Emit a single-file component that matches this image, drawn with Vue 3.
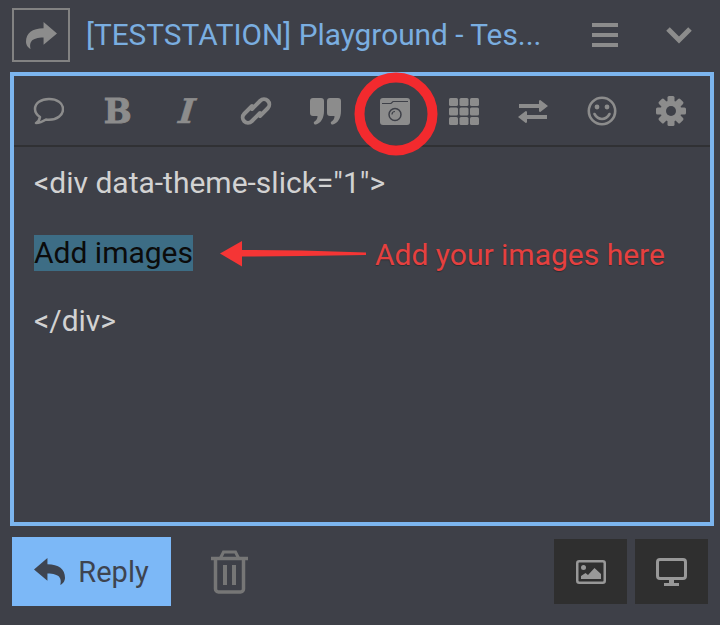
<script setup>
const tools = ['comment','bold','italic','link','quote','camera','grid','exchange','smile','gear']
</script>

<template>
  <div class="page">
    <header class="head">
      <button class="back">
        <svg width="31" height="27" viewBox="0 0 30 26"><path d="M30 11 17 0v6C6 6 0 11 0 19c0 3 2 6 4.500 7C3 20 5 15 17 15v7Z" fill="#8c8c8c"/></svg>
      </button>
      <div class="title">[TESTSTATION] Playground - Tes...</div>
      <svg class="menu" width="26" height="24" viewBox="0 0 26 24"><path d="M0 0h26v4H0zM0 10h26v4H0zM0 20h26v4H0z" fill="#8c8c8c"/></svg>
      <svg class="chev" width="26" height="18" viewBox="0 0 26 18"><path d="M2 3 13 14 24 3" fill="none" stroke="#8c8c8c" stroke-width="5"/></svg>
    </header>

    <section class="editor">
      <nav class="toolbar">
        <span v-for="t in tools" :key="t" class="tool">
          <svg v-if="t==='comment'" width="31" height="29" viewBox="0 0 31 29"><path d="M16 2C8 2 2 6 2 12c0 3 2 6 5 8-.5 3-2 5-4 6 4 0 7-1.500 10-3.500 1 .2 2 .2 3 .2 8 0 14-4.500 14-10.700S24 2 16 2Z" fill="none" stroke="#8c8c8c" stroke-width="2.500" stroke-linejoin="round"/></svg>
          <span v-else-if="t==='bold'" class="glyph bold">B</span>
          <span v-else-if="t==='italic'" class="glyph italic">I</span>
          <svg v-else-if="t==='link'" width="40" height="40" viewBox="0 0 40 40"><g fill="none" stroke="#8c8c8c" stroke-width="3.900" stroke-linecap="round"><path d="M16 18 24.250 9.750A5.300 5.300 0 0 1 31.750 17.250L24 25"/><path d="M24 22 15.750 30.250A5.300 5.300 0 0 1 8.250 22.750L16 15"/></g></svg>
          <svg v-else-if="t==='quote'" width="31" height="27" viewBox="0 0 31 27"><path d="M3 0h8a3 3 0 0 1 3 3v10c0 7-3 12-8 13.500-2 .5-3-2-1.500-3 2-1 3-3 3-5.500H3a3 3 0 0 1-3-3V3a3 3 0 0 1 3-3Z" fill="#8c8c8c"/><path d="M20 0h8a3 3 0 0 1 3 3v10c0 7-3 12-8 13.500-2 .5-3-2-1.500-3 2-1 3-3 3-5.500H20a3 3 0 0 1-3-3V3a3 3 0 0 1 3-3Z" fill="#8c8c8c"/></svg>
          <svg v-else-if="t==='camera'" width="30" height="27" viewBox="0 0 30 27"><rect width="30" height="27" rx="3" fill="#8c8c8c"/><path d="M2 5.500h9L13 3.500h15" fill="none" stroke="#3e4048" stroke-width="1.200"/><circle cx="15" cy="16.500" r="6" fill="none" stroke="#3e4048" stroke-width="1.500"/><path d="M12 16.500a3 3 0 0 1 3-3" fill="none" stroke="#3e4048" stroke-width="1.200"/></svg>
          <svg v-else-if="t==='grid'" width="30" height="27" viewBox="0 0 30 27"><g fill="#8c8c8c"><rect v-for="c in 9" :key="c" :x="((c-1)%3)*10.500" :y="Math.floor((c-1)/3)*9.500" width="9" height="8" rx="1.500"/></g></svg>
          <svg v-else-if="t==='exchange'" width="30" height="23" viewBox="0 0 30 23"><path d="M1 4h20V1a1 1 0 0 1 1.600-.7L30 6l-7.400 5.700A1 1 0 0 1 21 11V8H1ZM29 15H9v-3a1 1 0 0 0-1.600-.7L0 17l7.400 5.700A1 1 0 0 0 9 22v-3h20Z" fill="#8c8c8c"/></svg>
          <svg v-else-if="t==='smile'" width="30" height="30" viewBox="0 0 30 30"><circle cx="15" cy="15" r="13.200" fill="none" stroke="#8c8c8c" stroke-width="2.600"/><circle cx="10" cy="11" r="2.400" fill="#8c8c8c"/><circle cx="20" cy="11" r="2.400" fill="#8c8c8c"/><path d="M7.500 18c2 3.500 4.500 5 7.500 5s5.500-1.500 7.500-5" fill="none" stroke="#8c8c8c" stroke-width="2.600" stroke-linecap="round"/></svg>
          <svg v-else width="30" height="30" viewBox="0 0 30 30"><g fill="#8c8c8c"><rect v-for="a in [0,45,90,135]" :key="a" x="11.500" y="0" width="7" height="30" rx="1.500" :transform="`rotate(${a} 15 15)`"/><circle cx="15" cy="15" r="10.500"/></g><circle cx="15" cy="15" r="5" fill="#3e4048"/></svg>
        </span>
      </nav>
      <div class="body">
        <p>&lt;div data-theme-slick="1"&gt;</p>
        <p class="blank first"></p>
        <p><mark>Add images</mark></p>
        <p class="blank last"></p>
        <p>&lt;/div&gt;</p>
      </div>

      <svg class="ring" width="84" height="84" viewBox="0 0 84 84"><circle cx="42" cy="42" r="36.500" fill="none" stroke="#f32a2e" stroke-width="10"/></svg>
      <svg class="arrow" width="148" height="28" viewBox="0 0 148 28"><path d="M0 13.500 22 1v9l60 .5 64 2v2.500l-64 1-60 .5v10Z" fill="#f53535"/></svg>
      <div class="note">Add your images here</div>
    </section>

    <footer class="foot">
      <button class="reply">
        <svg width="31" height="27" viewBox="0 0 30 26"><path d="M0 11 13 0v6c11 0 17 5 17 13 0 3-2 6-4.500 7C27 20 25 15 13 15v7Z" fill="#3e4450"/></svg>
        <span>Reply</span>
      </button>
      <svg class="trash" width="37" height="44" viewBox="0 0 37 44"><g fill="none" stroke="#767676" stroke-width="3.500"><path d="M0 8.500h37"/><path d="M4.500 9v30a3 3 0 0 0 3 3h22a3 3 0 0 0 3-3V9"/><path d="M9.500 8l3-6h12l3 6" stroke-width="3"/><path d="M14 15v20M23 15v20" stroke-width="4"/></g></svg>
      <div class="spacer"></div>
      <button class="square">
        <svg width="30" height="24" viewBox="0 0 30 24"><rect x="1.250" y="1.250" width="27.500" height="21.500" rx="2" fill="none" stroke="#989898" stroke-width="2.500"/><circle cx="7.500" cy="7.500" r="2.500" fill="#989898"/><path d="M5 19v-3l4.500-3 2.500 2 6.500-7L25 14v5Z" fill="#989898"/></svg>
      </button>
      <button class="square">
        <svg width="31" height="28" viewBox="0 0 31 28"><rect x="1.500" y="1.500" width="28" height="19" rx="2.500" fill="none" stroke="#989898" stroke-width="3"/><path d="M13 22h5v3h5v3H8v-3h5Z" fill="#989898"/></svg>
      </button>
    </footer>
  </div>
</template>

<style scoped>
.page {
  width: 720px;
  height: 625px;
  background: #3e4048;
  font-family: Roboto, "Liberation Sans", sans-serif;
  overflow: hidden;
  box-sizing: border-box;
}
button {
  border: 0;
  padding: 0;
  font: inherit;
  display: flex;
  align-items: center;
  justify-content: center;
}
.head {
  height: 72px;
  display: flex;
  align-items: center;
  padding: 0 28px 2px 12px;
  box-sizing: border-box;
}
.back {
  width: 58px;
  height: 54px;
  box-sizing: border-box;
  background: transparent;
  border: 2px solid #828282;
  flex: none;
  margin-right: 16px;
}
.title {
  flex: 1;
  font-size: 29.8px;
  line-height: 34px;
  color: #7aaee0;
  white-space: nowrap;
}
.menu { flex: none; margin-right: 48px; }
.chev { flex: none; }
.editor {
  position: relative;
  margin: 0 6px 0 10px;
  height: 454px;
  border: 4px solid #7cb5ee;
  box-sizing: border-box;
}
.toolbar {
  height: 71px;
  display: grid;
  grid-template-columns: repeat(10, 69.2px);
  border-bottom: 2px solid #303134;
  box-sizing: border-box;
}
.tool {
  display: flex;
  align-items: center;
  justify-content: center;
  padding-top: 1px;
}
.glyph {
  color: #8c8c8c;
  font-family: "DejaVu Serif", serif;
  font-size: 33px;
  line-height: 1;
  font-weight: 700;
  -webkit-text-stroke: 1px #8c8c8c;
}
.glyph.italic {
  font-style: italic;
  font-size: 34px;
  transform: skewX(-6deg);
  -webkit-text-stroke: .5px #8c8c8c;
}
.body {
  padding: 19px 20px 0;
  font-size: 30px;
  line-height: 34px;
  color: #d2d2d2;
}
.body p { margin: 0; min-height: 34px; }
.body p.first { min-height: 35px; }
.body p.last { min-height: 33px; }
mark {
  background: #3d6d85;
  color: #0b0b0b;
  display: inline-block;
  line-height: 36px;
}
.ring { position: absolute; left: 340px; top: -4px; }
.arrow { position: absolute; left: 206px; top: 164px; }
.note {
  position: absolute;
  left: 361px;
  top: 161px;
  font-size: 30px;
  line-height: 36px;
  color: #e6403f;
  text-shadow: 0 1px 1px rgba(0,0,0,.3);
  white-space: nowrap;
}
.foot {
  display: flex;
  align-items: center;
  height: 69px;
  margin-top: 11px;
  padding: 0 12px;
}
.reply {
  width: 159px;
  height: 69px;
  background: #7cb8f7;
  color: #3e4450;
  font-size: 29px;
  gap: 13px;
  flex: none;
}
.trash { margin-left: 40px; flex: none; }
.spacer { flex: 1; }
.square {
  width: 73px;
  height: 65px;
  background: #2f2f2f;
  margin-left: 8px;
  flex: none;
}
</style>
